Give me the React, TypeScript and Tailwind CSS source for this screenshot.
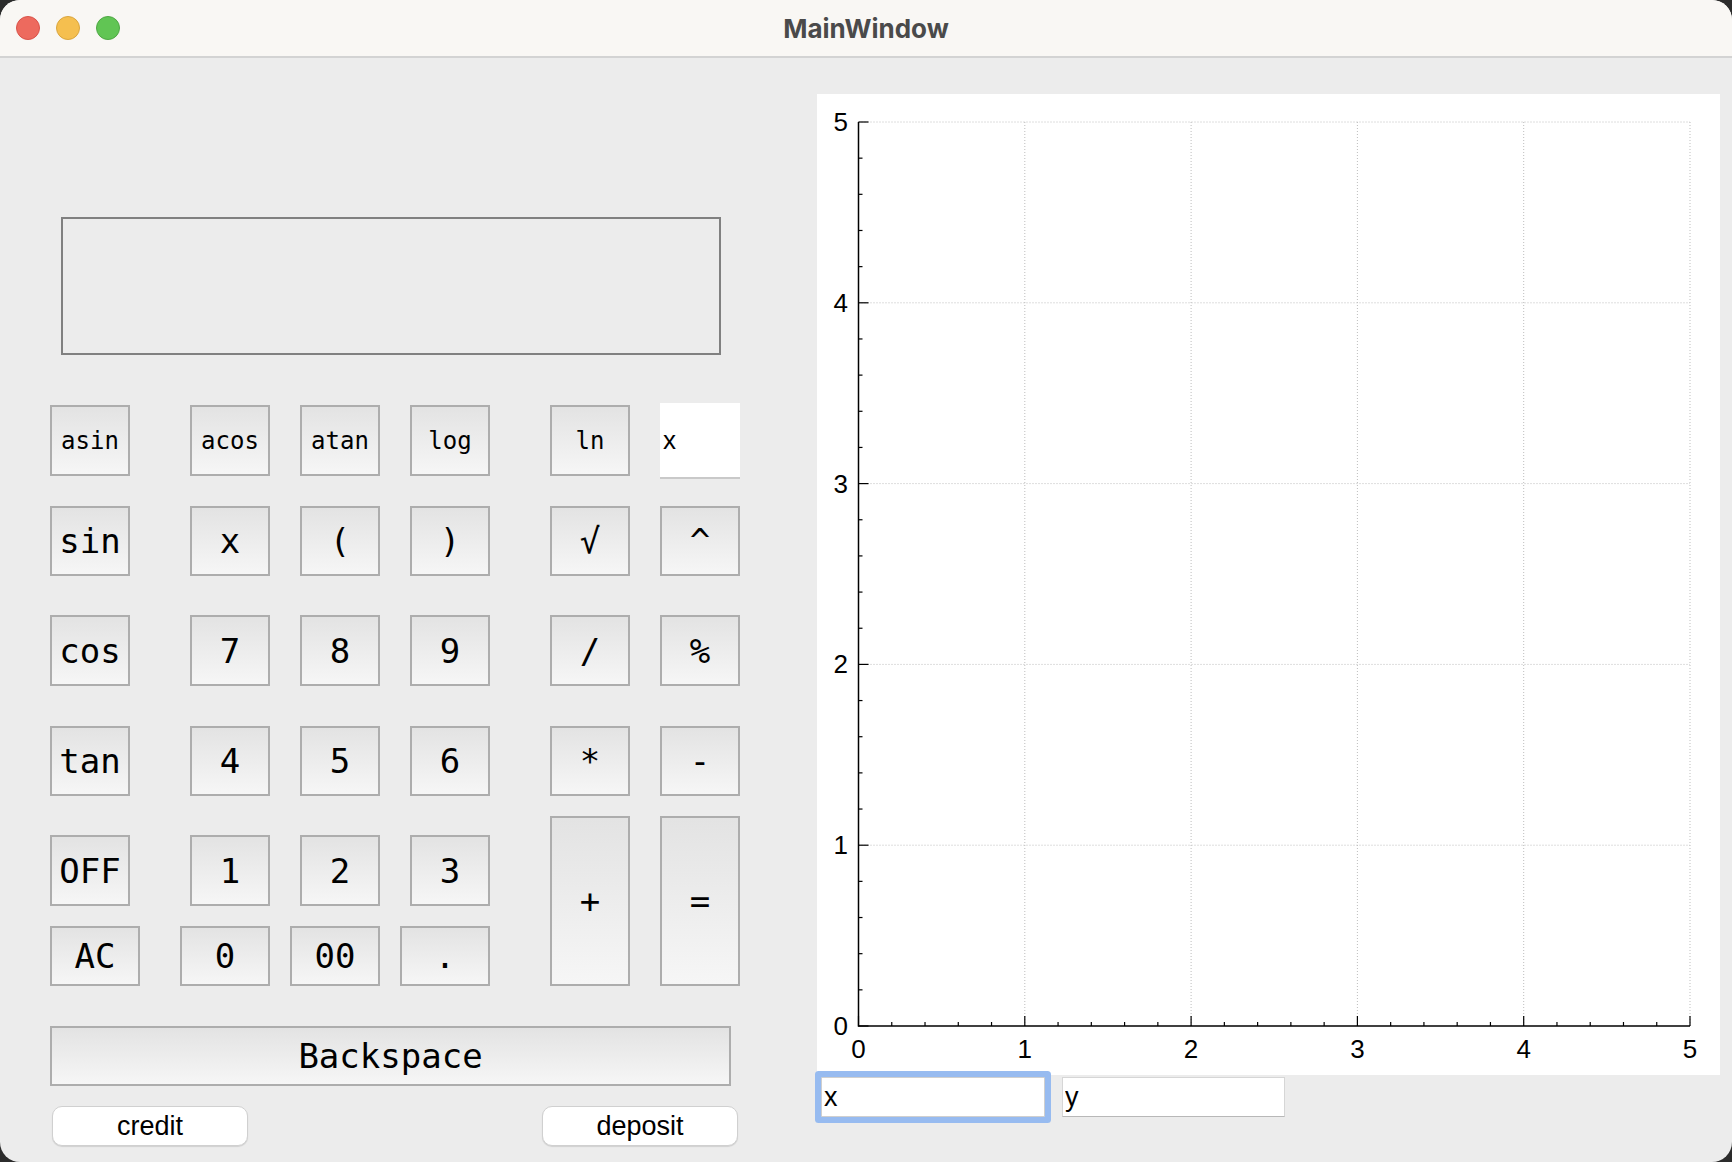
import React from "react";

const mono = "font-['DejaVu_Sans_Mono',monospace]";
const keyBase =
  "flex items-center justify-center border-2 border-[#adadad] bg-linear-to-b from-[#e3e3e3] to-[#f6f6f6] text-black leading-none " +
  mono;

function Key({ label, className = "", small = false }: { label: string; className?: string; small?: boolean }) {
  return (
    <button className={`${keyBase} ${small ? "text-[24px]" : "text-[34px]"} ${className}`}>
      {label}
    </button>
  );
}

// grid row: col1 at 50, then 190, 300, 410
function KeyRow({ keys, className = "", small = false }: { keys: string[]; className?: string; small?: boolean }) {
  return (
    <div className={`grid grid-cols-[110px_80px_80px_80px] gap-x-[30px] ${className}`}>
      {keys.map((k) => (
        <Key key={k} label={k} small={small} className="h-full w-[80px]" />
      ))}
    </div>
  );
}

const X0 = 41.5;
const Y0 = 932;
const XU = 166.3;
const YU = 180.8;

function Chart() {
  const xEnd = X0 + 5 * XU;
  const yTop = Y0 - 5 * YU;
  const ticks = Array.from({ length: 26 }, (_, i) => i);
  const units = [0, 1, 2, 3, 4, 5];
  return (
    <div className="h-[981px] w-[903px] bg-white">
      <svg width="903" height="981" className="block">
        {units.slice(1).map((i) => (
          <line
            key={"v" + i}
            x1={X0 + i * XU}
            x2={X0 + i * XU}
            y1={yTop}
            y2={Y0}
            stroke="#bdbdbd"
            strokeWidth="1"
            strokeDasharray="1 2"
          />
        ))}
        {units.slice(1).map((j) => (
          <line
            key={"h" + j}
            x1={X0}
            x2={xEnd}
            y1={Y0 - j * YU}
            y2={Y0 - j * YU}
            stroke="#bdbdbd"
            strokeWidth="1"
            strokeDasharray="1 2"
          />
        ))}
        <line x1={X0} x2={X0} y1={yTop} y2={Y0 + 0.75} stroke="#000" strokeWidth="1.5" />
        <line x1={X0} x2={xEnd} y1={Y0} y2={Y0} stroke="#000" strokeWidth="1.5" />
        {ticks.map((k) => (
          <line
            key={"tx" + k}
            x1={X0 + (k * XU) / 5}
            x2={X0 + (k * XU) / 5}
            y1={Y0}
            y2={Y0 - (k % 5 === 0 ? 10 : 4)}
            stroke="#000"
            strokeWidth="1.2"
          />
        ))}
        {ticks.map((k) => (
          <line
            key={"ty" + k}
            x1={X0}
            x2={X0 + (k % 5 === 0 ? 10 : 4)}
            y1={Y0 - (k * YU) / 5}
            y2={Y0 - (k * YU) / 5}
            stroke="#000"
            strokeWidth="1.2"
          />
        ))}
        <g fontFamily="'Liberation Sans', Arial, sans-serif" fontSize="26" fill="#000">
          {units.map((i) => (
            <text key={"lx" + i} x={X0 + i * XU} y={964} textAnchor="middle">
              {i}
            </text>
          ))}
          {units.map((j) => (
            <text key={"ly" + j} x={31} y={Y0 - j * YU + 9} textAnchor="end">
              {j}
            </text>
          ))}
        </g>
      </svg>
    </div>
  );
}

export default function App() {
  return (
    <div className="h-[1162px] w-[1732px] bg-[#2c2c2c]">
      <div className="flex h-full w-full flex-col overflow-hidden rounded-[20px] bg-[#ececec]">
        {/* title bar */}
        <div className="grid h-[58px] shrink-0 grid-cols-[1fr_auto_1fr] items-center border-b-2 border-[#d3d3d3] bg-[#f9f7f4]">
          <div className="flex items-center gap-[16px] pl-[16px]">
            <span className="h-[24px] w-[24px] rounded-full border border-[#d9534a] bg-[#ed6a5e]" />
            <span className="h-[24px] w-[24px] rounded-full border border-[#d9a53e] bg-[#f5bf4f]" />
            <span className="h-[24px] w-[24px] rounded-full border border-[#4fa744] bg-[#61c554]" />
          </div>
          <div className="font-['Inter',sans-serif] text-[26px] font-bold text-[#4a4a4a]">MainWindow</div>
          <div />
        </div>

        <div className="flex flex-1">
          {/* calculator */}
          <div className="flex w-[817px] flex-col pl-[50px] pt-[159px]">
            <div className="ml-[11px] h-[138px] w-[660px] border-2 border-[#808080]" />

            <div className="mt-[50px] flex">
              <div className="flex w-[440px] flex-col">
                <KeyRow keys={["asin", "acos", "atan", "log"]} small className="h-[71px]" />
                <KeyRow keys={["sin", "x", "(", ")"]} className="mt-[30px] h-[70px]" />
                <KeyRow keys={["cos", "7", "8", "9"]} className="mt-[39px] h-[71px]" />
                <KeyRow keys={["tan", "4", "5", "6"]} className="mt-[40px] h-[70px]" />
                <KeyRow keys={["OFF", "1", "2", "3"]} className="mt-[39px] h-[71px]" />
                <div className="mt-[20px] flex h-[60px]">
                  <Key label="AC" className="w-[90px]" />
                  <Key label="0" className="ml-[40px] w-[90px]" />
                  <Key label="00" className="ml-[20px] w-[90px]" />
                  <Key label="." className="ml-[20px] w-[90px]" />
                </div>
              </div>

              <div className="ml-[60px] flex flex-col">
                <div className="grid h-[71px] grid-cols-[80px_80px] items-start gap-x-[30px]">
                  <Key label="ln" small className="h-[71px]" />
                  <div className="-mt-[2px] flex h-[76px] items-center border-b-2 border-[#c9c9c9] bg-white pl-[3px] font-['Liberation_Sans',Arial,sans-serif] text-[26px] text-black">
                    x
                  </div>
                </div>
                <div className="mt-[30px] grid h-[70px] grid-cols-[80px_80px] gap-x-[30px]">
                  <Key label="√" />
                  <Key label="^" />
                </div>
                <div className="mt-[39px] grid h-[71px] grid-cols-[80px_80px] gap-x-[30px]">
                  <Key label="/" />
                  <Key label="%" />
                </div>
                <div className="mt-[40px] grid h-[70px] grid-cols-[80px_80px] gap-x-[30px]">
                  <Key label="*" />
                  <Key label="-" />
                </div>
                <div className="mt-[20px] grid h-[170px] grid-cols-[80px_80px] gap-x-[30px]">
                  <Key label="+" />
                  <Key label="=" />
                </div>
              </div>
            </div>

            <Key label="Backspace" className="mt-[40px] h-[60px] w-[681px]" />

            <div className="mt-[20px] flex w-[688px] justify-between pl-[2px]">
              <button className="h-[40px] w-[196px] rounded-[10px] border border-[#d0d0d0] bg-white font-['Liberation_Sans',Arial,sans-serif] text-[27px] leading-none text-black shadow-[0_1px_1px_rgba(0,0,0,0.12)]">
                credit
              </button>
              <button className="h-[40px] w-[196px] rounded-[10px] border border-[#d0d0d0] bg-white font-['Liberation_Sans',Arial,sans-serif] text-[27px] leading-none text-black shadow-[0_1px_1px_rgba(0,0,0,0.12)]">
                deposit
              </button>
            </div>
          </div>

          {/* graph */}
          <div className="flex flex-col pt-[36px]">
            <Chart />
            <div className="mt-[2px] flex items-center">
              <input
                defaultValue="x"
                className="ml-[4px] h-[40px] w-[224px] rounded-[1px] border border-[#cfcfcf] bg-white px-[2px] font-['Liberation_Sans',Arial,sans-serif] text-[27px] text-black shadow-[0_0_0_6px_#97bbf0] outline-none"
              />
              <input
                defaultValue="y"
                className="ml-[17px] h-[40px] w-[223px] border border-[#d6d6d6] border-b-[#b8b8b8] bg-white px-[2px] font-['Liberation_Sans',Arial,sans-serif] text-[27px] text-black outline-none"
              />
            </div>
          </div>
        </div>
      </div>
    </div>
  );
}
